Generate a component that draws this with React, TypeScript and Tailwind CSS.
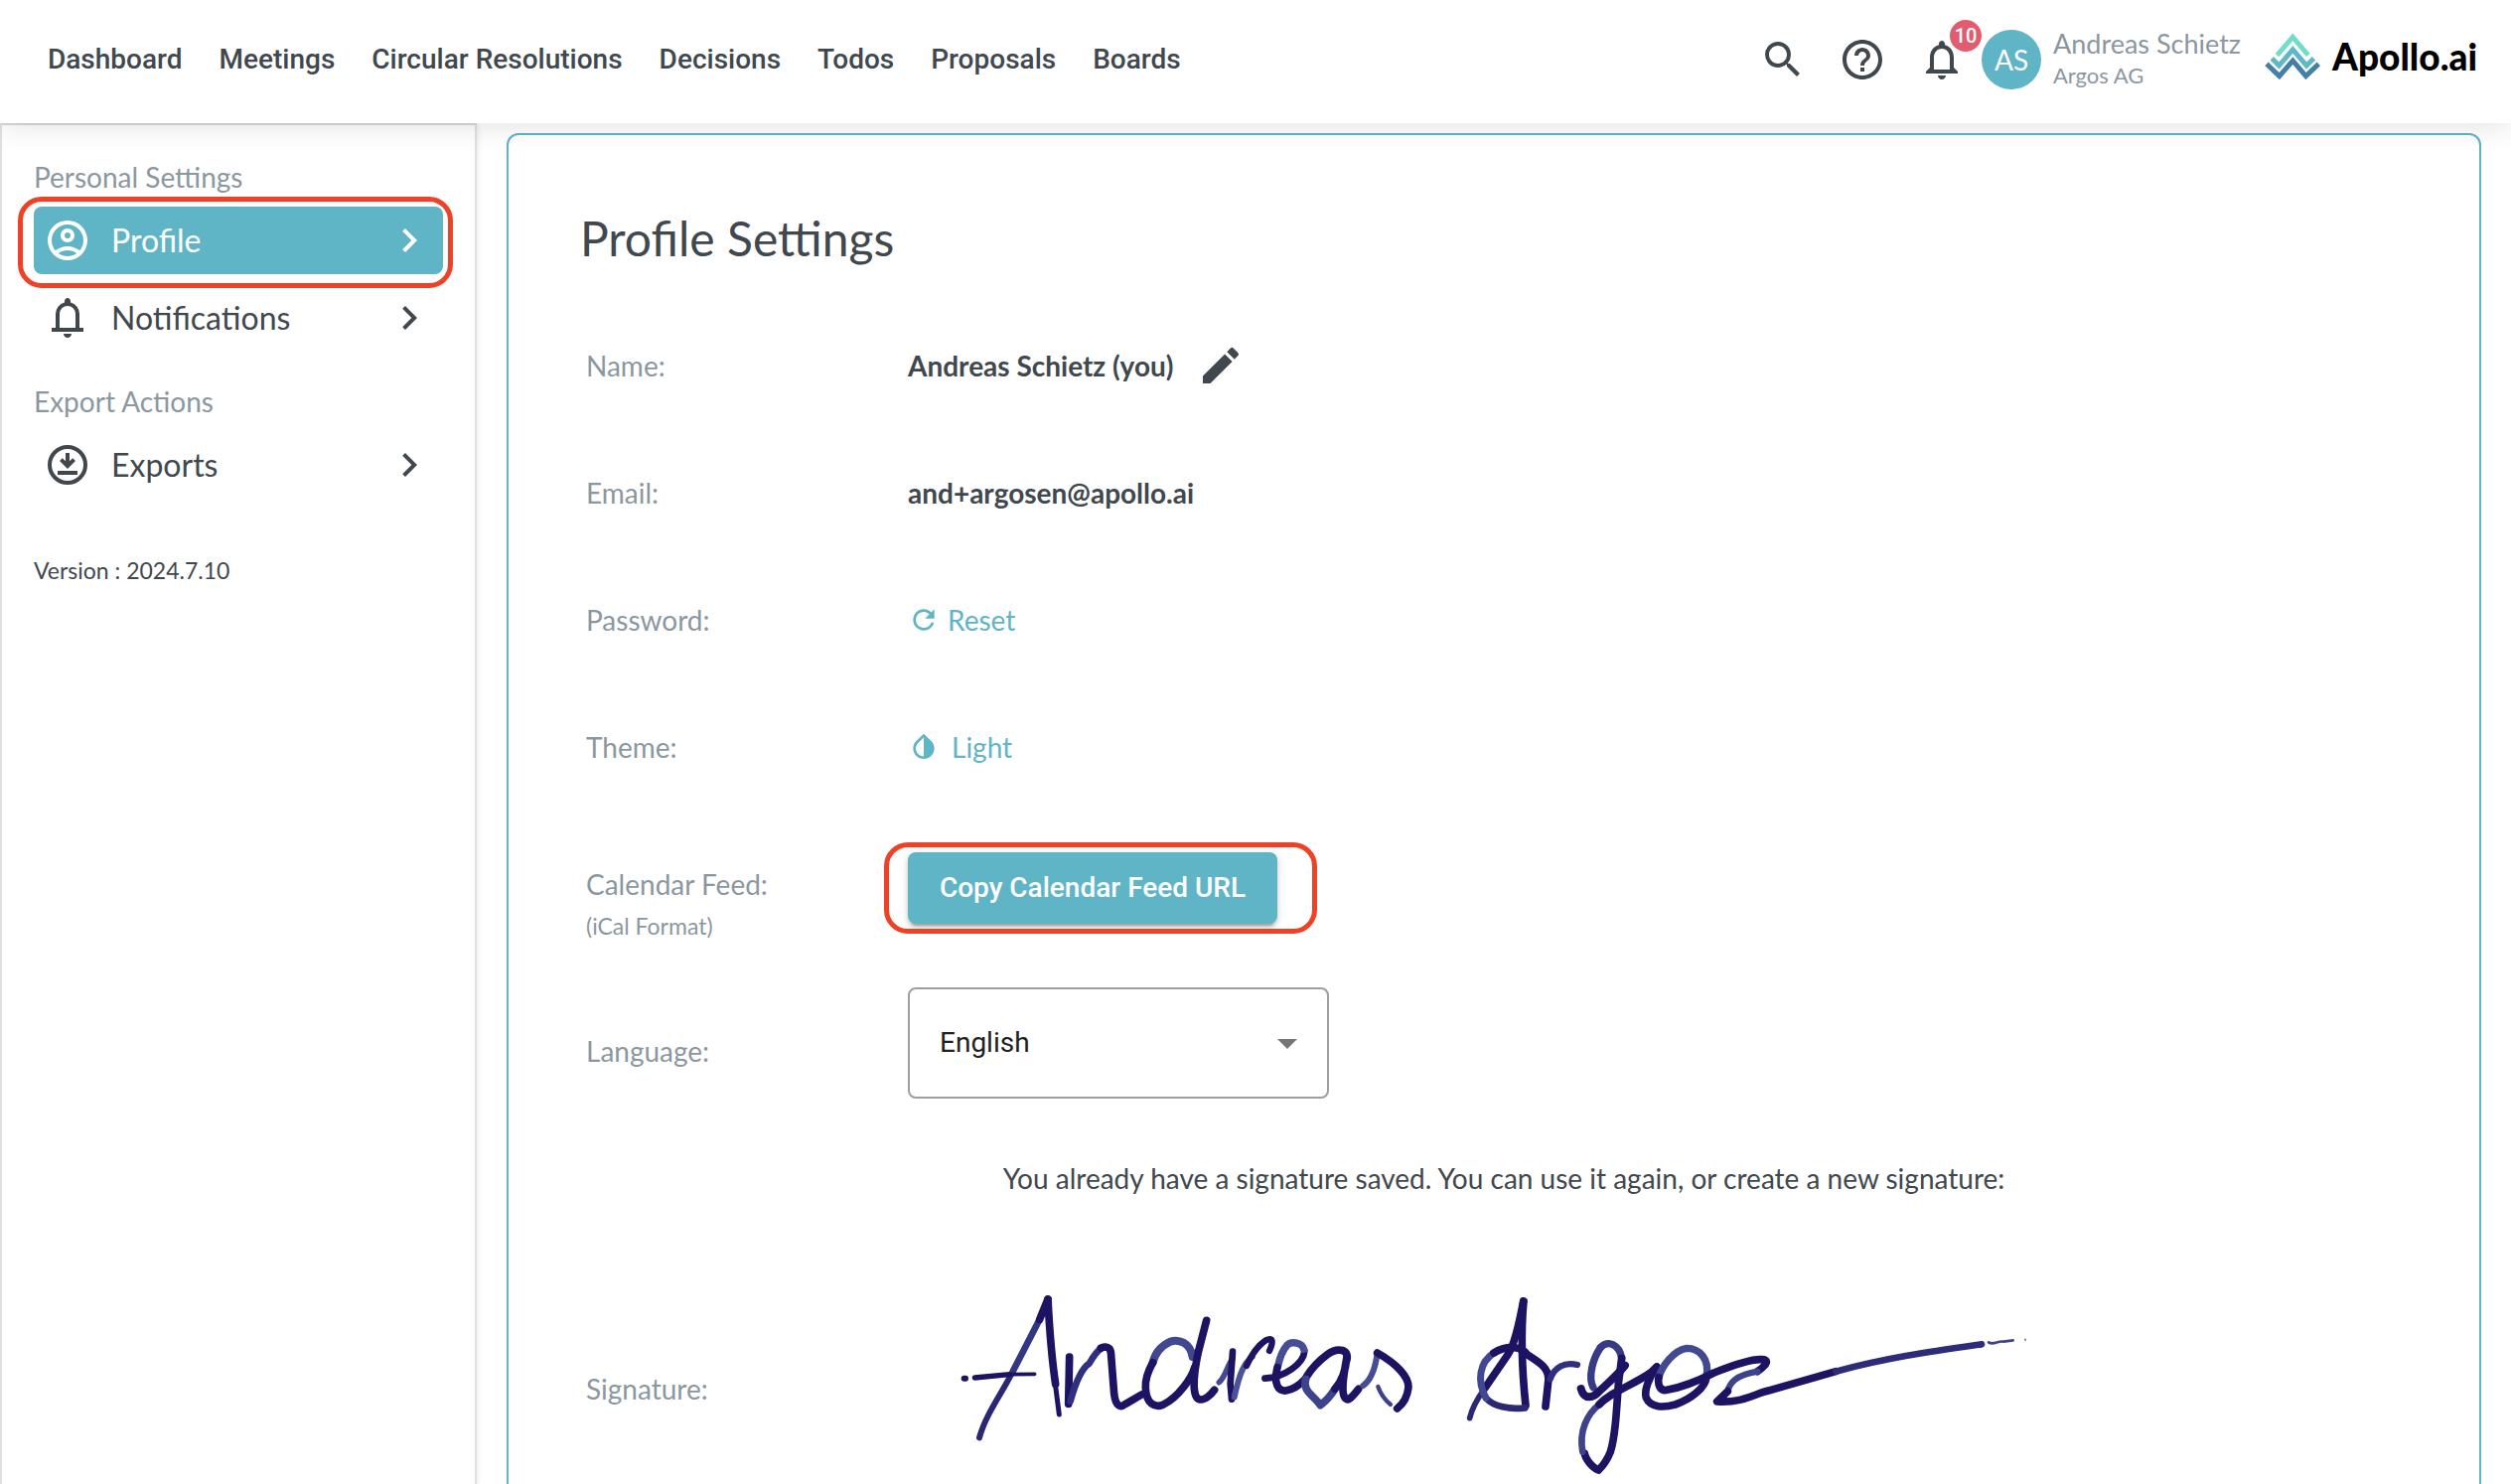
import React, { useState } from 'react';
import {
  MdArrowDropDown,
  MdChevronRight,
  MdEdit,
  MdHelpOutline,
  MdInvertColors,
  MdNotificationsNone,
  MdRefresh,
  MdSearch,
} from 'react-icons/md';

const NAV_ITEMS = ['Dashboard', 'Meetings', 'Circular Resolutions', 'Decisions', 'Todos', 'Proposals', 'Boards'];

interface IconProps {
  className?: string;
}

const AccountIcon: React.FC<IconProps> = ({ className }) => (
  <svg viewBox="0 0 24 24" fill="currentColor" className={className} aria-hidden="true">
    <path d="M5.85 17.1q1.275-.975 2.85-1.537T12 15t3.3.563t2.85 1.537q.875-1.025 1.363-2.325T20 12q0-3.325-2.337-5.663T12 4T6.337 6.338T4 12q0 1.475.488 2.775T5.85 17.1M12 13q-1.475 0-2.488-1.012T8.5 9.5t1.013-2.488T12 6t2.488 1.013T15.5 9.5t-1.012 2.488T12 13m0 9q-2.075 0-3.9-.788t-3.175-2.137T2.788 15.9T2 12t.788-3.9t2.137-3.175T8.1 2.788T12 2t3.9.788t3.175 2.137T21.213 8.1T22 12t-.788 3.9t-2.137 3.175t-3.175 2.138T12 22m0-2q1.325 0 2.5-.387t2.15-1.113q-.975-.725-2.15-1.112T12 17t-2.5.388T7.35 18.5q.975.725 2.15 1.113T12 20m0-9q.65 0 1.075-.425T13.5 9.5t-.425-1.075T12 8t-1.075.425T10.5 9.5t.425 1.075T12 11" />
  </svg>
);

const BellIcon: React.FC<IconProps> = ({ className }) => (
  <svg viewBox="0 0 24 24" fill="currentColor" className={className} aria-hidden="true">
    <path d="M4 19v-2h2v-7q0-2.075 1.25-3.687T10.5 4.2v-.7q0-.625.438-1.062T12 2t1.063.438T13.5 3.5v.7q2 .5 3.25 2.113T18 10v7h2v2zM12 22q-.825 0-1.412-.587T10 20h4q0 .825-.587 1.413T12 22m-4-5h8v-7q0-1.65-1.175-2.825T12 6T9.175 7.175T8 10z" />
  </svg>
);

const DownloadIcon: React.FC<IconProps> = ({ className }) => (
  <svg viewBox="0 0 24 24" fill="currentColor" className={className} aria-hidden="true">
    <circle cx="12" cy="12" r="9" fill="none" stroke="currentColor" strokeWidth="2" />
    <path d="M7 17h10v-2H7zM12 14l4-4-1.4-1.4-1.6 1.55V6h-2v4.15L9.4 8.6 8 10z" />
  </svg>
);

const LogoMark: React.FC<IconProps> = ({ className }) => (
  <svg viewBox="0 0 170 145" fill="none" strokeWidth="15" className={className} aria-hidden="true">
    <path d="M38 68 86 13l47 55" stroke="#72dccb" />
    <path d="M22 78l22 22 42-49 42 49 22-22" stroke="#5fb8c6" />
    <path d="M6 95l39 37 41-47 40 47 39-37" stroke="#457fa6" />
  </svg>
);

const Signature: React.FC<IconProps> = ({ className }) => (
  <svg viewBox="0 0 1200 424" fill="none" className={className} role="img" aria-label="Saved signature">
    <g transform="translate(26 74) scale(.33333)" stroke="#1c1363" strokeWidth="23" strokeLinecap="round" strokeLinejoin="round">
      {/* first name */}
      <path d="M138 502C158 430 205 370 240 300" stroke="#2b2873" strokeWidth="18" />
      <path d="M240 300 320 145" stroke="#333680" strokeWidth="20" />
      <path d="M320 145 345 84" />
      <path d="M345 84C350 180 356 260 368 340" />
      <path d="M366 330 379 432" strokeWidth="15" />
      <path d="M124 321 230 311" strokeWidth="16" />
      <path d="M230 311 305 310" strokeWidth="11" />
      <path d="M92 323h4" strokeWidth="18" />
      <path d="M410 258 407 400" />
      <path d="M413 392C430 330 448 292 470 278 500 225 520 222 532 236" stroke="#2f3180" strokeWidth="20" />
      <path d="M505 231C530 222 536 236 536 255L545 370C550 410 565 412 580 400L628 372" />
      <path d="M782 258C774 214 740 204 715 212 685 226 668 250 662 275" stroke="#3f4890" strokeWidth="24" />
      <path d="M662 275C648 300 638 325 640 352 642 400 668 412 692 403 740 380 780 320 788 290" />
      <path d="M824 148 800 240C780 330 782 385 806 387 820 388 838 372 848 358" />
      <path d="M862 335C880 320 885 290 903 262" stroke="#424a91" strokeWidth="17" />
      <path d="M903 242 896 340 900 386" strokeWidth="20" />
      <path d="M908 380C925 300 940 275 962 258" stroke="#4a5397" strokeWidth="18" />
      <path d="M945 285C965 240 985 220 1003 208 1026 196 1026 214 1014 240" strokeWidth="19" />
      <path d="M1000 323C1060 320 1118 278 1120 240" strokeWidth="20" />
      <path d="M1118 235C1112 215 1082 210 1068 222 1052 240 1045 262 1040 285" stroke="#454d93" strokeWidth="22" />
      <path d="M1038 290C1026 340 1040 362 1064 360 1090 356 1108 340 1122 325" />
      <path d="M1247 270C1258 235 1220 228 1190 250 1160 272 1140 295 1126 318" />
      <path d="M1124 325C1112 362 1150 375 1168 404 1180 395 1200 375 1212 355" stroke="#3c438b" strokeWidth="23" />
      <path d="M1212 355C1232 330 1245 300 1247 262M1244 280C1234 340 1230 385 1252 387 1265 380 1275 365 1283 355" />
      <path d="M1297 345C1325 325 1335 285 1340 246" stroke="#454d93" strokeWidth="18" />
      <path d="M1340 246C1400 280 1436 320 1434 350 1430 385 1412 405 1400 414" />
      <path d="M1380 402C1365 390 1350 370 1342 348" stroke="#3c438b" strokeWidth="13" />

      {/* last name */}
      <path d="M1619 443C1625 415 1645 380 1665 352" stroke="#2b2873" strokeWidth="17" />
      <path d="M1665 352 1735 250C1755 220 1768 160 1781 90" />
      <path d="M1782 90C1772 200 1777 300 1788 405" />
      <path d="M1786 412C1740 418 1690 408 1668 382" stroke="#2b2873" strokeWidth="20" />
      <path d="M1668 382C1640 330 1648 275 1692 246" stroke="#3f4890" strokeWidth="21" />
      <path d="M1692 246C1730 222 1778 226 1794 252 1830 275 1856 290 1857 325L1848 408" />
      <path d="M1862 325C1875 290 1905 272 1944 282" stroke="#2f3180" strokeWidth="19" />
      <path d="M2078 262C2072 222 2036 204 2014 230" stroke="#363b84" strokeWidth="22" />
      <path d="M2014 230C1990 265 1976 320 1992 350" stroke="#363b84" strokeWidth="22" />
      <path d="M1955 354C1965 392 1995 380 2010 362 2045 330 2075 300 2088 284" strokeWidth="24" />
      <path d="M2078 262 2068 340C2062 430 2058 500 2044 545 2030 580 2016 592 2008 600 1988 592 1968 565 1966 550" />
      <path d="M1960 545C1948 480 1975 430 2010 402" stroke="#3c438b" strokeWidth="20" />
      <path d="M2010 402C2050 360 2110 345 2165 306L2184 288" />
      <path d="M2184 288C2160 320 2145 360 2152 382 2165 412 2205 412 2240 402 2290 385 2330 350 2334 320" />
      <path d="M2334 318C2345 262 2310 232 2275 232 2235 238 2200 285 2190 320" stroke="#414990" strokeWidth="22" />
      <path d="M2190 320C2186 345 2195 362 2215 358 2260 350 2310 330 2357 306 2410 285 2470 265 2498 266 2524 264 2520 280 2488 302" />
      <path d="M2488 302C2420 315 2405 335 2398 362" stroke="#3c438b" strokeWidth="19" />
      <path d="M2398 362 2366 393C2420 396 2450 386 2500 366L2725 302" strokeWidth="23" />
      <path d="M2725 302C2880 260 3010 242 3165 220" stroke="#2c2c78" strokeWidth="20" />
      <path d="M3186 214C3200 225 3215 208 3232 212L3260 208" stroke="#3c438b" strokeWidth="8" />
      <path d="M3297 205v3" stroke="#6a70a8" strokeWidth="5" />
    </g>
  </svg>
);

// Marker ring drawn around a control
const Highlight: React.FC<IconProps> = ({ className }) => (
  <span className={`absolute border-[5px] border-[#ee4126] rounded-3xl pointer-events-none ${className}`} />
);

interface SideItemProps {
  icon: React.ReactNode;
  label: string;
  active?: boolean;
}

const SideItem: React.FC<SideItemProps> = ({ icon, label, active }) => (
  <div className="relative">
    <a
      href="#"
      className={`h-17 px-2.5 flex items-center gap-5 rounded-lg text-[32px] ${
        active ? 'bg-[#5fb5c6] text-white' : 'text-[#40484e]'
      }`}
    >
      {icon}
      <span className="flex-1">{label}</span>
      <MdChevronRight size={48} />
    </a>
    {active && <Highlight className="-top-2.5 -bottom-3.5 -left-4 -right-2.5" />}
  </div>
);

interface RowProps {
  label: string;
  children: React.ReactNode;
}

const Row: React.FC<RowProps> = ({ label, children }) => (
  <div className="h-32 grid grid-cols-[324px_1fr] items-center">
    <span className="text-[#8b979f]">{label}</span>
    <div className="flex items-center">{children}</div>
  </div>
);

const App: React.FC = () => {
  const [language, setLanguage] = useState('en');

  return (
    <div className="h-screen flex flex-col bg-white text-[#40484e] text-[28px] font-['Lato',sans-serif]">
      <header className="relative z-10 h-31 shrink-0 pl-12 pr-[34px] pb-1 flex items-center justify-between bg-white shadow-[0_0_30px_rgba(0,0,0,0.14)]">
        <nav className="flex items-center gap-[37px] font-['Roboto',sans-serif] font-medium">
          {NAV_ITEMS.map((item) => (
            <a key={item} href="#">{item}</a>
          ))}
        </nav>

        <div className="flex items-center">
          <button type="button" aria-label="Search" className="p-4">
            <MdSearch size={48} />
          </button>
          <button type="button" aria-label="Help" className="p-4">
            <MdHelpOutline size={48} />
          </button>
          <button type="button" aria-label="Notifications" className="p-4">
            <span className="relative block">
              <MdNotificationsNone size={48} />
              <span className="absolute -top-4 -right-4 w-8 h-8 rounded-full bg-[#e25c70] text-white text-[20px] leading-8 font-medium font-['Roboto',sans-serif]">
                10
              </span>
            </span>
          </button>
          <div className="w-15 h-15 rounded-full bg-[#5fb5c6] text-white flex items-center justify-center">AS</div>
          <div className="ml-3 text-[#8b979f]">
            <div className="text-[27px] leading-8">Andreas Schietz</div>
            <div className="text-[22px] leading-8">Argos AG</div>
          </div>
          <a href="#" className="ml-6 mb-1.5 flex items-center gap-3 text-black">
            <LogoMark className="w-14 h-12" />
            <span className="text-[37px] leading-12 font-black">Apollo.ai</span>
          </a>
        </div>
      </header>

      <div className="flex-1 min-h-0 flex">
        <aside className="w-[480px] shrink-0 px-8 pt-8 border-2 border-b-0 border-[#e0e0e0] border-t-[#d8d8d8] shadow-[0_0_6px_rgba(0,0,0,0.12)]">
          <h2 className="mb-2.5 leading-10 text-[#8b979f]">Personal Settings</h2>
          <div className="flex flex-col gap-2.5">
            <SideItem icon={<AccountIcon className="w-12 h-12" />} label="Profile" active />
            <SideItem icon={<BellIcon className="w-12 h-12" />} label="Notifications" />
          </div>
          <h2 className="mt-[30px] mb-2.5 leading-10 text-[#8b979f]">Export Actions</h2>
          <SideItem icon={<DownloadIcon className="w-12 h-12" />} label="Exports" />
          <p className="mt-14 text-[23px] leading-8">Version : 2024.7.10</p>
        </aside>

        <main className="flex-1 min-w-0 px-[30px] pt-2.5 overflow-y-auto [scrollbar-width:none]">
          <section className="pl-18 pr-18 pt-[74px] border-2 border-[#5fb5c6] rounded-xl">
            <h1 className="mb-[34px] text-[48px] leading-15">Profile Settings</h1>

            <div className="pl-1.5">
              <Row label="Name:">
                <span className="font-bold">Andreas Schietz (you)</span>
                <button type="button" aria-label="Edit name" className="ml-6">
                  <MdEdit size={48} />
                </button>
              </Row>
              <Row label="Email:">
                <span className="font-bold">and+argosen@apollo.ai</span>
              </Row>
              <Row label="Password:">
                <button type="button" className="flex items-center gap-2 text-[#5fb5c6]">
                  <MdRefresh size={32} />
                  Reset
                </button>
              </Row>
              <Row label="Theme:">
                <button type="button" className="flex items-center gap-3 text-[#5fb5c6]">
                  <MdInvertColors size={32} />
                  Light
                </button>
              </Row>

              {/* Calendar feed */}
              <div className="pt-[42px] grid grid-cols-[324px_1fr] items-start">
                <div className="pt-3 text-[#8b979f]">
                  <div className="leading-10">Calendar Feed:</div>
                  <div className="text-[23px] leading-11">(iCal Format)</div>
                </div>
                <div className="relative w-fit">
                  <button
                    type="button"
                    className="w-[372px] h-18 rounded-lg bg-[#5fb5c6] text-white font-medium font-['Roboto',sans-serif] shadow-[0_6px_2px_-4px_rgba(0,0,0,0.2),0_4px_4px_rgba(0,0,0,0.14),0_2px_10px_rgba(0,0,0,0.12)]"
                  >
                    Copy Calendar Feed URL
                  </button>
                  <Highlight className="-top-2.5 -bottom-2.5 -left-6 -right-10" />
                </div>
              </div>

              {/* Language */}
              <div className="mt-10 grid grid-cols-[324px_1fr] items-start">
                <label htmlFor="language" className="pt-11 leading-10 text-[#8b979f]">Language:</label>
                <div className="relative w-[424px]">
                  <select
                    id="language"
                    value={language}
                    onChange={(e) => setLanguage(e.target.value)}
                    className="w-full h-28 px-[30px] border-2 border-[#9e9e9e] rounded-lg bg-white appearance-none text-[#212121] font-['Roboto',sans-serif]"
                  >
                    <option value="en">English</option>
                    <option value="de">Deutsch</option>
                  </select>
                  <MdArrowDropDown size={48} className="absolute right-[18px] top-8 text-[#757575] pointer-events-none" />
                </div>
              </div>

              {/* Signature */}
              <div className="mt-15 grid grid-cols-[324px_1fr] items-center">
                <span className="text-[#8b979f]">Signature:</span>
                <div className="max-w-[1200px]">
                  <p className="leading-10 text-center">
                    You already have a signature saved. You can use it again, or create a new signature:
                  </p>
                  <Signature className="w-full" />
                </div>
              </div>
            </div>
          </section>
        </main>
      </div>
    </div>
  );
};

export default App;
